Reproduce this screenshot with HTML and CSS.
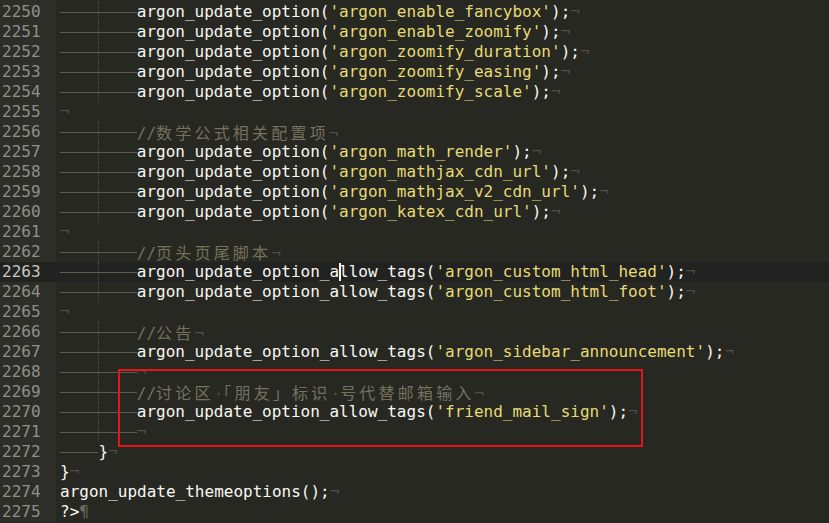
FILE: index.html
```html
<!DOCTYPE html>
<html lang="zh-CN">
<head>
    <meta charset="UTF-8">
    <title>functions.php</title>
    <link rel="stylesheet" href="styles.css">
</head>
<body>
    <div class="editor">
        <div class="row"><span class="num">2250</span><span class="code"><span class="t"></span><span class="t g"></span>argon_update_option(<span class="s">'argon_enable_fancybox'</span>);<span class="ws">¬</span></span></div>
        <div class="row"><span class="num">2251</span><span class="code"><span class="t"></span><span class="t g"></span>argon_update_option(<span class="s">'argon_enable_zoomify'</span>);<span class="ws">¬</span></span></div>
        <div class="row"><span class="num">2252</span><span class="code"><span class="t"></span><span class="t g"></span>argon_update_option(<span class="s">'argon_zoomify_duration'</span>);<span class="ws">¬</span></span></div>
        <div class="row"><span class="num">2253</span><span class="code"><span class="t"></span><span class="t g"></span>argon_update_option(<span class="s">'argon_zoomify_easing'</span>);<span class="ws">¬</span></span></div>
        <div class="row"><span class="num">2254</span><span class="code"><span class="t"></span><span class="t g"></span>argon_update_option(<span class="s">'argon_zoomify_scale'</span>);<span class="ws">¬</span></span></div>
        <div class="row"><span class="num">2255</span><span class="code"><span class="ws">¬</span></span></div>
        <div class="row"><span class="num">2256</span><span class="code"><span class="t"></span><span class="t g"></span><span class="c">//<span class="cjk">数学公式相关配置项</span></span><span class="ws">¬</span></span></div>
        <div class="row"><span class="num">2257</span><span class="code"><span class="t"></span><span class="t g"></span>argon_update_option(<span class="s">'argon_math_render'</span>);<span class="ws">¬</span></span></div>
        <div class="row"><span class="num">2258</span><span class="code"><span class="t"></span><span class="t g"></span>argon_update_option(<span class="s">'argon_mathjax_cdn_url'</span>);<span class="ws">¬</span></span></div>
        <div class="row"><span class="num">2259</span><span class="code"><span class="t"></span><span class="t g"></span>argon_update_option(<span class="s">'argon_mathjax_v2_cdn_url'</span>);<span class="ws">¬</span></span></div>
        <div class="row"><span class="num">2260</span><span class="code"><span class="t"></span><span class="t g"></span>argon_update_option(<span class="s">'argon_katex_cdn_url'</span>);<span class="ws">¬</span></span></div>
        <div class="row"><span class="num">2261</span><span class="code"><span class="ws">¬</span></span></div>
        <div class="row"><span class="num">2262</span><span class="code"><span class="t"></span><span class="t g"></span><span class="c">//<span class="cjk">页头页尾脚本</span></span><span class="ws">¬</span></span></div>
        <div class="row current"><span class="num">2263</span><span class="code"><span class="t"></span><span class="t g"></span>argon_update_option_a<span class="caret"></span>llow_tags(<span class="s">'argon_custom_html_head'</span>);<span class="ws">¬</span></span></div>
        <div class="row"><span class="num">2264</span><span class="code"><span class="t"></span><span class="t g"></span>argon_update_option_allow_tags(<span class="s">'argon_custom_html_foot'</span>);<span class="ws">¬</span></span></div>
        <div class="row"><span class="num">2265</span><span class="code"><span class="ws">¬</span></span></div>
        <div class="row"><span class="num">2266</span><span class="code"><span class="t"></span><span class="t g"></span><span class="c">//<span class="cjk">公告</span></span><span class="ws">¬</span></span></div>
        <div class="row"><span class="num">2267</span><span class="code"><span class="t"></span><span class="t g"></span>argon_update_option_allow_tags(<span class="s">'argon_sidebar_announcement'</span>);<span class="ws">¬</span></span></div>
        <div class="row"><span class="num">2268</span><span class="code"><span class="t"></span><span class="t g"></span><span class="ws">¬</span></span></div>
        <div class="row"><span class="num">2269</span><span class="code"><span class="t"></span><span class="t g"></span><span class="c">//<span class="cjk">讨论区</span><span class="ws">·</span><span class="cjk">「朋友」标识</span><span class="ws">·</span><span class="cjk">号代替邮箱输入</span></span><span class="ws">¬</span></span></div>
        <div class="row"><span class="num">2270</span><span class="code"><span class="t"></span><span class="t g"></span>argon_update_option_allow_tags(<span class="s">'friend_mail_sign'</span>);<span class="ws">¬</span></span></div>
        <div class="row"><span class="num">2271</span><span class="code"><span class="t"></span><span class="t g"></span><span class="ws">¬</span></span></div>
        <div class="row"><span class="num">2272</span><span class="code"><span class="t"></span>}<span class="ws">¬</span></span></div>
        <div class="row"><span class="num">2273</span><span class="code">}<span class="ws">¬</span></span></div>
        <div class="row"><span class="num">2274</span><span class="code">argon_update_themeoptions();<span class="ws">¬</span></span></div>
        <div class="row"><span class="num">2275</span><span class="code">?&gt;<span class="ws eof">¶</span></span></div>
    </div>
    <div class="mark"></div>
</body>
</html>
```

FILE: styles.css
```css
html, body {
    margin: 0;
    padding: 0;
    background: #272822;
    height: 100%;
    overflow: hidden;
}
.editor {
    padding-top: 2px;
    font-family: "DejaVu Sans Mono", "Liberation Mono", "Noto Sans CJK SC", monospace;
    font-size: 16px;
    line-height: 20px;
    color: #f8f8f2;
    background: linear-gradient(to right, #2e2e29 0, #2e2e29 56px, #272822 56px);
}
.row {
    display: flex;
    height: 20px;
    white-space: pre;
}
.row.current {
    background: #222220;
}
.num {
    width: 54px;
    padding-left: 2px;
    color: #8f908a;
    flex-shrink: 0;
}
.current .num {
    color: #c8c8c2;
}
.code {
    padding-left: 4px;
}
.t {
    display: inline-block;
    vertical-align: top;
    width: 38.4px;
    height: 20px;
    box-sizing: border-box;
    background: linear-gradient(to bottom, transparent 10px, #5c5c52 10px, #5c5c52 11px, transparent 11px);
}
.t.g {
    border-left: 1px dotted #4c4c44;
}
.s {
    color: #e6db74;
}
.c {
    color: #75715e;
}
.cjk {
    font-family: "Noto Sans CJK SC", sans-serif;
    letter-spacing: 3.2px;
}
.ws {
    color: #4f4f46;
}
.eof {
    color: #6a6a60;
}
.caret {
    display: inline-block;
    vertical-align: top;
    width: 0;
    height: 20px;
    position: relative;
}
.caret::after {
    content: "";
    position: absolute;
    left: 0;
    top: 1px;
    width: 2px;
    height: 18px;
    background: #f8f8f0;
}
.mark {
    position: absolute;
    left: 118px;
    top: 369px;
    width: 525px;
    height: 78px;
    box-sizing: border-box;
    border: 2px solid #e3161f;
}
```
